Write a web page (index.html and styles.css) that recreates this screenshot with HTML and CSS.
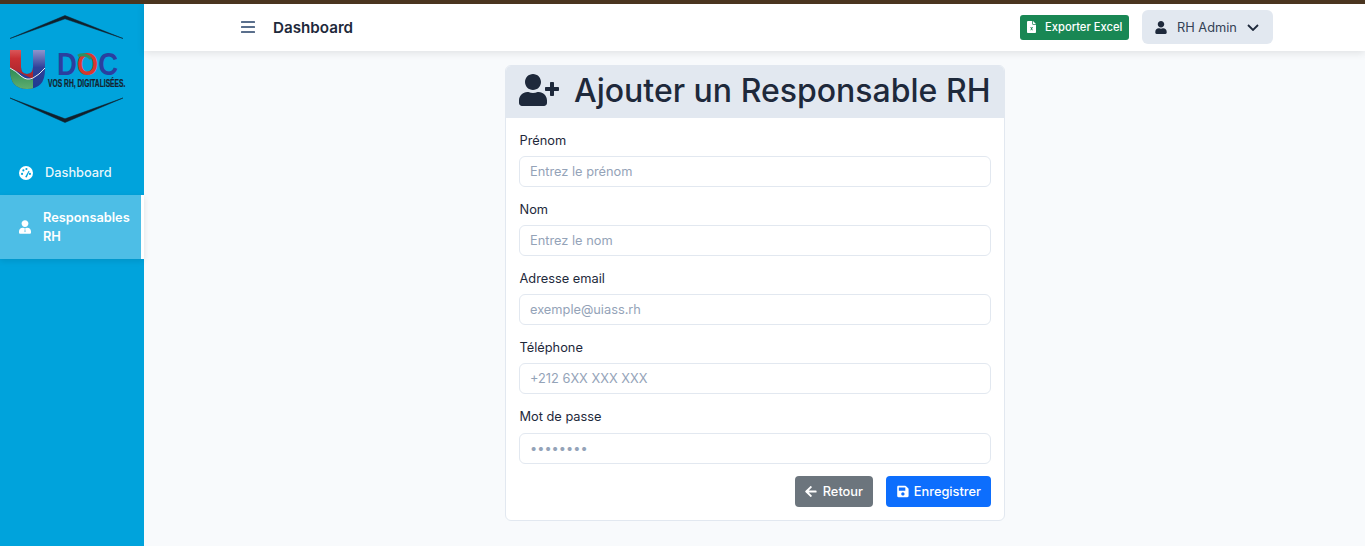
FILE: index.html
```html
<!DOCTYPE html>
<html lang="fr">
<head>
<meta charset="utf-8">
<title>Ajouter un Responsable RH</title>
<link rel="stylesheet" href="styles.css">
</head>
<body>
<div class="layout">
  <aside class="sidebar">
    <div class="logo">
      <svg class="logo-svg" viewBox="0 0 144 146" width="144" height="146">
        <defs>
          <clipPath id="uClip"><path d="M10 46h11v17q0 7 6 7 6 0 6-7V46h12v20q0 19-18 19-17 0-17-19z"/></clipPath>
          <linearGradient id="redGrad" x1="0" y1="0" x2="0" y2="1">
            <stop offset="0" stop-color="#d9575a"/><stop offset=".3" stop-color="#c92f33"/><stop offset="1" stop-color="#a3262e"/>
          </linearGradient>
          <linearGradient id="blueGrad" x1="0" y1="0" x2="0" y2="1">
            <stop offset="0" stop-color="#8f95cc"/><stop offset=".45" stop-color="#2f4199"/><stop offset="1" stop-color="#1f3a90"/>
          </linearGradient>
          <linearGradient id="greenGrad" x1="0" y1="0" x2="0" y2="1">
            <stop offset="0" stop-color="#2b8a55"/><stop offset="1" stop-color="#5fae6f"/>
          </linearGradient>
        </defs>
        <path class="hex" d="M10 34.500 65 11.500 123 34.500 65 14.800z"/>
        <path class="hex" d="M10 94 65 114.800 123 94 65 118.500z"/>
        <g clip-path="url(#uClip)">
          <rect x="10" y="46" width="35" height="39" fill="url(#blueGrad)"/>
          <path d="M10 46h23v29L10 64z" fill="url(#redGrad)"/>
          <path d="M10 64q6 3 11 8 6 5 12 3v10H10z" fill="url(#greenGrad)"/>
          <path class="swoosh" d="M10 64q6 3 11 8 6 5 12 2 6-3 12-10"/>
        </g>
        <text class="logo-doc" transform="translate(57 71) scale(.86 1)">D<tspan class="logo-o">O</tspan>C</text>
        <path class="logo-arc" d="M78 52a10 10 0 0 1 13 3"/>
        <text class="logo-tag" transform="translate(48 83) scale(.61 1)">VOS RH, DIGITALISÉES.</text>
      </svg>
    </div>
    <nav class="side-nav">
      <a class="side-link">
        <svg class="side-icon" viewBox="0 0 16 16" width="14" height="14"><circle cx="8" cy="8" r="8" fill="#fff"/><circle cx="3.500" cy="9" r="1.200" fill="#00a3dc"/><circle cx="5" cy="5" r="1.200" fill="#00a3dc"/><circle cx="8.500" cy="3.500" r="1.200" fill="#00a3dc"/><circle cx="12.500" cy="9" r="1.200" fill="#00a3dc"/><path d="M7 12.500 11 5.500l1 .6-3.200 7z" fill="#00a3dc"/></svg>
        <span>Dashboard</span>
      </a>
      <a class="side-link active">
        <svg class="side-icon" viewBox="0 0 448 512" width="12" height="14"><path fill="#fff" d="M224 256c70.700 0 128-57.300 128-128S294.700 0 224 0 96 57.300 96 128s57.300 128 128 128zm89.600 32h-16.700c-22.200 10.200-46.900 16-72.900 16s-50.600-5.800-72.900-16h-16.700C60.200 288 0 348.200 0 422.400V464c0 26.500 21.500 48 48 48h352c26.500 0 48-21.500 48-48v-41.600c0-74.200-60.200-134.400-134.400-134.400z"/><path d="M209 310h30l-7 40 14 70-22 30-22-30 14-70z" fill="#4dbde6"/></svg>
        <span>Responsables RH</span>
      </a>
    </nav>
  </aside>
  <div class="main">
    <header class="navbar">
      <div class="nav-left">
        <svg class="burger" viewBox="0 0 14 12" width="14" height="12"><rect width="14" height="2" y="0" rx=".5"/><rect width="14" height="2" y="5" rx=".5"/><rect width="14" height="2" y="10" rx=".5"/></svg>
        <span class="nav-title">Dashboard</span>
      </div>
      <div class="nav-right">
        <a class="btn-excel">
          <svg viewBox="0 0 384 512" width="9" height="12"><path fill="#fff" d="M224 0H48C21.500 0 0 21.500 0 48v416c0 26.500 21.500 48 48 48h288c26.500 0 48-21.500 48-48V160H256c-17.700 0-32-14.300-32-32zm32 0v128h128z"/><path d="M140 260h36l20 40 20-40h36l-37 68 37 68h-36l-20-40-20 40h-36l37-68z" fill="#198754"/></svg>
          <span>Exporter Excel</span>
        </a>
        <button class="btn-user" type="button">
          <svg viewBox="0 0 448 512" width="12" height="13"><path fill="#1e293b" d="M224 256c70.700 0 128-57.300 128-128S294.700 0 224 0 96 57.300 96 128s57.300 128 128 128zm89.600 32h-16.700c-22.200 10.200-46.900 16-72.900 16s-50.600-5.800-72.900-16h-16.700C60.200 288 0 348.200 0 422.400V464c0 26.500 21.500 48 48 48h352c26.500 0 48-21.500 48-48v-41.600c0-74.200-60.200-134.400-134.400-134.400z"/></svg>
          <span>RH Admin</span>
          <svg class="chev" viewBox="0 0 12 7" width="12" height="7"><path d="M1 1l5 5 5-5" fill="none" stroke="#1e293b" stroke-width="1.800"/></svg>
        </button>
      </div>
    </header>
    <main class="content">
      <section class="card">
        <h1 class="card-head">
          <svg viewBox="0 0 640 512" width="40" height="32"><path fill="#1e293b" d="M624 208h-64v-64c0-8.800-7.200-16-16-16h-32c-8.800 0-16 7.200-16 16v64h-64c-8.800 0-16 7.200-16 16v32c0 8.800 7.200 16 16 16h64v64c0 8.800 7.200 16 16 16h32c8.800 0 16-7.200 16-16v-64h64c8.800 0 16-7.200 16-16v-32c0-8.800-7.200-16-16-16zm-400 48c70.700 0 128-57.300 128-128S294.700 0 224 0 96 57.300 96 128s57.300 128 128 128zm89.600 32h-16.700c-22.200 10.200-46.900 16-72.900 16s-50.600-5.800-72.900-16h-16.700C60.200 288 0 348.200 0 422.400V464c0 26.500 21.500 48 48 48h352c26.500 0 48-21.500 48-48v-41.600c0-74.200-60.200-134.400-134.400-134.400z"/></svg>
          <span>Ajouter un Responsable RH</span>
        </h1>
        <form class="card-body">
          <div class="field"><label>Prénom</label><input type="text" placeholder="Entrez le prénom"></div>
          <div class="field"><label>Nom</label><input type="text" placeholder="Entrez le nom"></div>
          <div class="field"><label>Adresse email</label><input type="email" placeholder="exemple@uiass.rh"></div>
          <div class="field"><label>Téléphone</label><input type="text" placeholder="+212 6XX XXX XXX"></div>
          <div class="field"><label>Mot de passe</label><input type="password" placeholder="••••••••"></div>
          <div class="actions">
            <a class="btn btn-back">
              <svg viewBox="0 0 448 512" width="12" height="13"><path fill="#fff" d="M257.500 445.100l-22.200 22.200c-9.400 9.400-24.600 9.400-33.900 0L7 273c-9.400-9.400-9.400-24.600 0-33.900L201.400 44.700c9.400-9.400 24.600-9.400 33.900 0l22.200 22.200c9.500 9.500 9.300 25-.4 34.300L136.600 216H424c13.300 0 24 10.700 24 24v32c0 13.300-10.700 24-24 24H136.600l120.500 114.800c9.800 9.300 10 24.800.4 34.300z"/></svg>
              <span>Retour</span>
            </a>
            <a class="btn btn-save">
              <svg viewBox="0 0 448 512" width="12" height="13"><path fill="#fff" d="M433.941 129.941l-83.882-83.882A48 48 0 0 0 316.118 32H48C21.490 32 0 53.490 0 80v352c0 26.510 21.490 48 48 48h352c26.510 0 48-21.490 48-48V163.882a48 48 0 0 0-14.059-33.941zM224 416c-35.346 0-64-28.654-64-64 0-35.346 28.654-64 64-64s64 28.654 64 64c0 35.346-28.654 64-64 64zm96-304.520V212c0 6.627-5.373 12-12 12H76c-6.627 0-12-5.373-12-12V108c0-6.627 5.373-12 12-12h228.520c3.183 0 6.235 1.264 8.485 3.515l3.480 3.480A11.996 11.996 0 0 1 320 111.480z"/></svg>
              <span>Enregistrer</span>
            </a>
          </div>
        </form>
      </section>
    </main>
  </div>
</div>
</body>
</html>
```
FILE: styles.css
```css
* { box-sizing: border-box; }
html, body { margin: 0; height: 100%; }
body {
  font-family: Inter, "Noto Sans", sans-serif;
  background: #f8fafc;
  color: #1e293b;
  border-top: 4px solid #4a3520;
  overflow: hidden;
}
.layout { display: flex; height: 542px; }
.sidebar { width: 144px; flex: none; background: #00a3dc; color: #fff; }
.logo { height: 146px; }
.logo-svg { display: block; }
.hex { fill: #10202c; stroke: #10202c; stroke-width: .5; }
.swoosh { fill: none; stroke: #e8eef0; stroke-width: 1; }
.logo-doc { font: 700 32px "Liberation Sans", sans-serif; fill: #2a3f9f; }
.logo-o { fill: #d8382e; }
.logo-arc { fill: none; stroke: #2f8f5f; stroke-width: 3; }
.logo-tag { font: 700 11px "Liberation Sans", sans-serif; fill: #14232f; stroke: #14232f; stroke-width: .25; }
.side-nav { display: flex; flex-direction: column; }
.side-link {
  display: flex; align-items: center; gap: 12px;
  height: 45px; padding-left: 19px;
  font-size: 12.800px; font-weight: 500; line-height: 19px;
  color: rgba(255,255,255,.92);
}
.side-icon { flex: none; }
.side-link.active {
  height: 64px; gap: 12px;
  background: rgba(255,255,255,.3);
  border-right: 3px solid #fff;
  font-weight: 600; color: #fff;
  box-shadow: 0 2px 6px rgba(0,0,0,.1);
}
.side-link.active span { width: 90px; }
.main { flex: 1; min-width: 0; display: flex; flex-direction: column; }
.navbar {
  height: 47px; flex: none; background: #fff;
  display: flex; align-items: center; justify-content: space-between;
  padding: 0 92px 1px 97px;
  box-shadow: 0 2px 8px rgba(0,0,0,.1);
}
.nav-left { display: flex; align-items: center; gap: 18px; }
.burger { fill: #5a6f8c; display: block; }
.nav-title { font-size: 15.200px; font-weight: 600; color: #1e293b; }
.nav-right { display: flex; align-items: center; gap: 13px; }
.btn-excel {
  display: flex; align-items: center; gap: 9px;
  height: 25px; width: 109px; padding-left: 7px;
  background: #198754; color: #fff; border-radius: 3px;
  font-size: 11.200px; font-weight: 500;
}
.btn-user {
  display: flex; align-items: center; gap: 10px;
  height: 34px; width: 131px; padding: 0 0 0 13px;
  background: #e2e8f0; color: #334155;
  border: 0; border-radius: 6px;
  font: 400 12.800px Inter, sans-serif;
}
.content { flex: 1; display: flex; justify-content: center; padding-top: 14px; padding-left: 1px; }
.card {
  width: 500px; height: 456px;
  background: #fff; border: 1px solid #e2e8f0; border-radius: 6px;
  overflow: hidden;
}
.card-head {
  display: flex; align-items: center; gap: 15px;
  height: 52px; margin: 0; padding: 0 0 4px 13px;
  background: #e2e8f0;
  font-size: 32px; font-weight: 500; color: #1e293b; white-space: nowrap;
}
.card-body { padding: 11.600px 13px 0; display: flex; flex-direction: column; }
.field { display: flex; flex-direction: column; margin-bottom: 11.900px; }
.field label { font-size: 12.800px; line-height: 21px; margin-bottom: 5.300px; padding-left: .5px; color: #1e293b; }
.field input {
  height: 31px; width: 100%; padding: 0 10px;
  border: 1px solid #e2e8f0; border-radius: 6px; background: #fff;
  font: 400 12.800px Inter, sans-serif; outline: none;
}
.field input::placeholder { color: #94a3b8; opacity: 1; }
.actions { display: flex; justify-content: flex-end; gap: 13px; }
.btn {
  display: flex; align-items: center; gap: 6px;
  height: 31px; border-radius: 4px; color: #fff;
  font-size: 12.800px; font-weight: 500; padding: 0 10px;
}
.btn-back { background: #6c757d; width: 78px; }
.btn-save { background: #0d6efd; width: 105px; padding-left: 11px; gap: 5px; }
```
